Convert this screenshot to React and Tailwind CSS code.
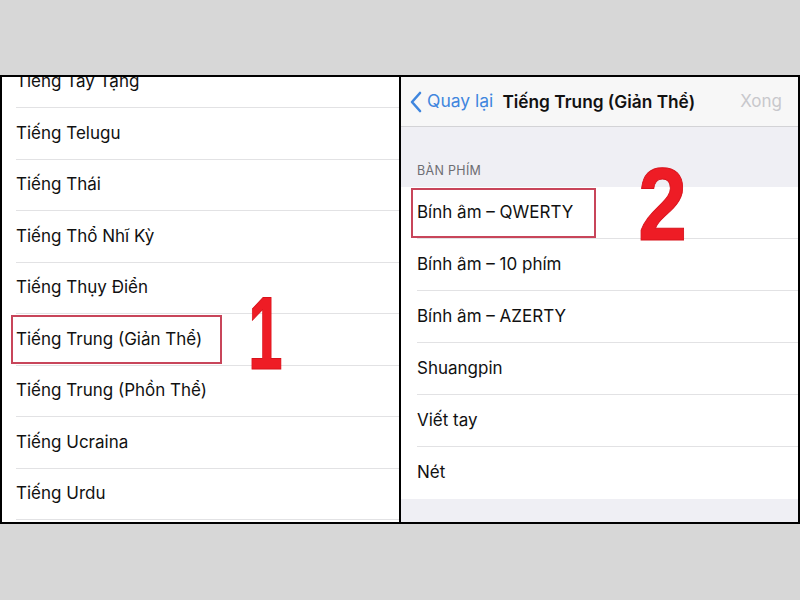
import React from "react";

const leftItems = [
  "Tiếng Tây Tạng",
  "Tiếng Telugu",
  "Tiếng Thái",
  "Tiếng Thổ Nhĩ Kỳ",
  "Tiếng Thụy Điển",
  "Tiếng Trung (Giản Thể)",
  "Tiếng Trung (Phồn Thể)",
  "Tiếng Ucraina",
  "Tiếng Urdu",
];

const rightItems = [
  "Bính âm – QWERTY",
  "Bính âm – 10 phím",
  "Bính âm – AZERTY",
  "Shuangpin",
  "Viết tay",
  "Nét",
];

const font = { fontFamily: "Inter, 'Liberation Sans', sans-serif" };
const numFont = { fontFamily: "'Liberation Sans', Arial, sans-serif", WebkitTextStroke: "1px #d8121b" };

export default function App() {
  return (
    <div className="w-[800px] h-[600px] bg-[#d7d7d7] pt-[75px]" style={font}>
      <div className="h-[449px] border-2 border-black flex bg-white">
        {/* Left panel */}
        <div className="w-[399px] shrink-0 bg-white overflow-hidden border-r-2 border-black relative">
          <div className="-mt-[20.5px] pl-[14px]">
            {leftItems.map((t, i) => (
              <div
                key={t}
                className="h-[51.5px] border-b border-[#e2e2e4] flex items-center text-[17px] text-[#111] relative"
              >
                <span>{t}</span>
                {i === 5 && (
                  <div className="absolute left-[-5px] top-[1px] w-[211px] h-[49px] border-2 border-[#c8455a]" />
                )}
              </div>
            ))}
          </div>
          <div
            className="absolute left-[246px] top-[204px] text-[104px] leading-none font-bold text-[#ee1c25] origin-left scale-x-[0.6]"
            style={numFont}
          >
            1
          </div>
        </div>
        {/* Right panel */}
        <div className="flex-1 bg-[#efeff4] flex flex-col relative">
          <div className="h-[50px] bg-[#f7f7f7] border-b border-[#d3d3d6] flex items-center pl-[8px] pr-[16px]">
            <svg width="14" height="22" viewBox="0 0 14 22" className="mr-[4px]">
              <path d="M11 2 L3 11 L11 20" fill="none" stroke="#3f86de" strokeWidth="2.6" strokeLinecap="round" strokeLinejoin="round" />
            </svg>
            <span className="text-[17.5px] text-[#3f86de]">Quay lại</span>
            <span className="ml-[9px] text-[17.3px] font-semibold text-[#111]">Tiếng Trung (Giản Thể)</span>
            <span className="ml-auto text-[17px] text-[#c8c8cc]">Xong</span>
          </div>
          <div className="h-[60px] flex items-end pl-[16px] pb-[6px] text-[12.5px] text-[#6d6d72] tracking-wide">
            BÀN PHÍM
          </div>
          <div className="bg-white pl-[16px]">
            {rightItems.map((t, i) => (
              <div
                key={t}
                className={`h-[52px] flex items-center text-[17px] text-[#111] relative ${i < rightItems.length - 1 ? "border-b border-[#e2e2e4]" : ""}`}
              >
                <span>{t}</span>
                {i === 0 && (
                  <div className="absolute left-[-6px] top-[1px] w-[185px] h-[50px] border-2 border-[#c8455a]" />
                )}
              </div>
            ))}
          </div>
          <div
            className="absolute left-[237px] top-[75px] text-[104px] leading-none font-bold text-[#ee1c25] origin-left scale-x-[0.85]"
            style={numFont}
          >
            2
          </div>
        </div>
      </div>
    </div>
  );
}
